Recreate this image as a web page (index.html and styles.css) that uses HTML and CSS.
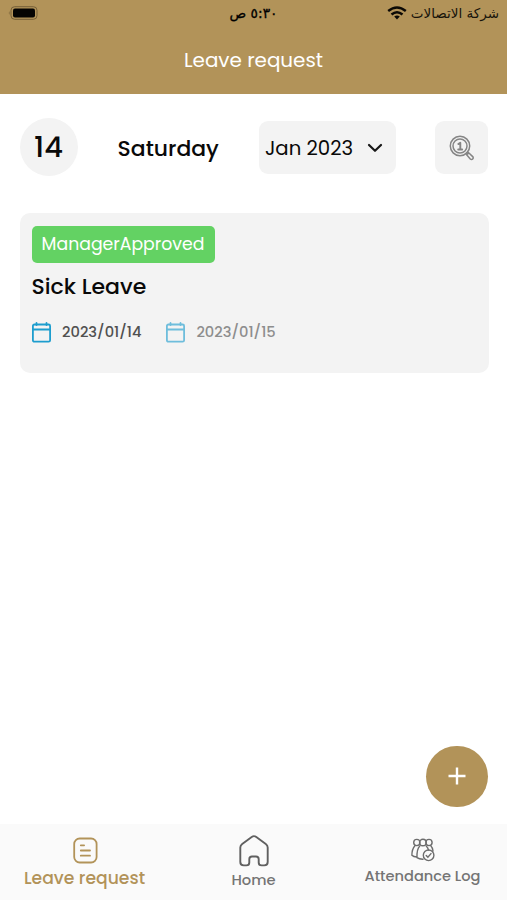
FILE: index.html
```html
<!DOCTYPE html>
<html lang="en">
<head>
<meta charset="utf-8">
<meta name="viewport" content="width=device-width, initial-scale=1">
<title>Leave request</title>
<link rel="stylesheet" href="styles.css">
</head>
<body>
<div class="app">
  <header class="header">
    <div class="status">
      <svg class="battery" width="30" height="14" viewBox="0 0 30 14"><rect x="3" y=".7" width="26" height="12.6" rx="3.6" fill="none" stroke="#755f38" stroke-width="1"/><rect x="5" y="2.6" width="22" height="8.8" rx="2" fill="#050403"/><path d="M1.5 5Q0 7 1.5 9Z" fill="#755f38"/></svg>
      <span class="time" dir="rtl" lang="ar">٥:٣٠ ص</span>
      <div class="network">
        <svg width="20" height="14" viewBox="0 0 20 14" fill="none" stroke="#0b0905" stroke-width="2.5"><path d="M1.2 5Q10-2 18.8 5M4.5 8.5Q10 4 15.5 8.5"/><path d="M7.2 10.6Q10 8.4 12.8 10.6L10 13.6Z" fill="#0b0905" stroke="none"/></svg>
        <span class="carrier" dir="rtl" lang="ar">شركة الاتصالات</span>
      </div>
    </div>
    <h1 class="title">Leave request</h1>
  </header>
  <main class="main">
    <div class="filters">
      <div class="day">14</div>
      <div class="weekday">Saturday</div>
      <button class="month"><span class="month-text">Jan 2023</span><svg width="16" height="10" viewBox="0 0 16 10" fill="none" stroke="#171717" stroke-width="2.2" stroke-linecap="round" stroke-linejoin="round"><path d="m2 2 6 5.8L14 2"/></svg></button>
      <button class="search" aria-label="Search"><svg width="26" height="26" viewBox="0 0 26 26" fill="none" stroke="#858585" stroke-width="1.5" stroke-linejoin="round" stroke-linecap="round"><circle cx="11" cy="11" r="9.7"/><circle cx="11" cy="11" r="7"/><path d="m9.3 9.1 2-1.3v6.6M9.2 14.5h4" stroke-width="1.9"/><path d="m18 18 .9.9M17.4 19.5c-.8-1 1-2.8 2-2l4.3 4.1c1.6 1.6-.8 4-2.4 2.4Z"/></svg></button>
    </div>
    <article class="card">
      <span class="badge">ManagerApproved</span>
      <h2 class="type">Sick Leave</h2>
      <div class="dates">
        <div class="date"><svg class="calendar" width="19" height="21" viewBox="0 0 19 21" fill="none" stroke="currentColor" stroke-width="1.8" stroke-linecap="round"><rect x=".9" y="2.5" width="17.2" height="17.2" rx="1.5"/><path d="M1 7.5h17M4.5 1v2M14.5 1v2"/></svg><span>2023/01/14</span></div>
        <div class="date end"><svg class="calendar" width="19" height="21" viewBox="0 0 19 21" fill="none" stroke="currentColor" stroke-width="1.8" stroke-linecap="round"><rect x=".9" y="2.5" width="17.2" height="17.2" rx="1.5"/><path d="M1 7.5h17M4.5 1v2M14.5 1v2"/></svg><span>2023/01/15</span></div>
      </div>
    </article>
    <button class="add" aria-label="Add request"><svg width="18" height="18" viewBox="0 0 18 18" stroke="#fff" stroke-width="2.4"><path d="M9 .5v17M.5 9h17"/></svg></button>
  </main>
  <nav class="nav">
    <a class="tab active"><svg width="26" height="27" viewBox="0 0 26 27" fill="none" stroke="currentColor" stroke-width="1.8" stroke-linecap="round"><rect x="2.2" y="1.5" width="22.4" height="24" rx="5.5"/><path d="M8.8 8.3h3.3M8.8 13.5h9.2M8.8 18.7h9.2"/></svg><span class="tab-request">Leave request</span></a>
    <a class="tab"><svg width="30" height="32" viewBox="0 0 30 32" fill="none" stroke="#606060" stroke-width="1.9" stroke-linejoin="round"><path d="M12.7 2Q15 .3 17.3 2L26.8 8.9Q28.7 10.3 28.7 12.5V27Q28.7 30.4 25.3 30.4H22.6Q19.7 30.4 19.7 27.5V24.2Q19.7 21.5 17 21.5H13Q10.3 21.5 10.3 24.2V27.5Q10.3 30.4 7.4 30.4H4.7Q1.3 30.4 1.3 27V12.5Q1.3 10.3 3.2 8.9Z"/></svg><span class="tab-home">Home</span></a>
    <a class="tab"><svg width="24" height="24" viewBox="0 0 24 24" fill="none" stroke="#6d6d6d" stroke-width="1.4" stroke-linecap="round"><circle cx="5.8" cy="4.5" r="3.1"/><circle cx="18" cy="4.5" r="3.1"/><circle cx="11.9" cy="4.5" r="3.3"/><path d="M3.9 7.8C2 10 .9 13 .9 17.2Q2.5 18.8 5.8 19M8.8 7.9C6.6 10 5.8 14 6 19.6Q8.4 21.3 12 21.2M15.2 7.9Q17 9.5 17.5 12M19.8 7.8Q21.7 9.8 22 13"/><circle cx="17.6" cy="17.3" r="5.3"/><path d="m15.2 17.5 1.7 1.8 3.1-3.7"/></svg><span class="tab-log">Attendance Log</span></a>
  </nav>
</div>
</body>
</html>
```
FILE: styles.css
```css
* { box-sizing: border-box; }
body { margin: 0; font-family: Poppins, Inter, sans-serif; background: #fff; color: #090909; }
button { border: 0; padding: 0; font: inherit; color: inherit; }
svg { display: block; flex: none; }
h1, h2 { margin: 0; font-weight: 400; }
span, .weekday, .title, .type { white-space: nowrap; }
.app { height: 900px; display: flex; flex-direction: column; }
.header { height: 94px; background: #b29359; }
.status { height: 26px; padding: 0 8px; display: grid; grid-template-columns: 1fr auto 1fr; align-items: center; color: #17130b; font-family: "DejaVu Sans", sans-serif; }
.time { font-size: 13.8px; color: #000; -webkit-text-stroke: .3px #000; }
.network { display: flex; justify-content: flex-end; align-items: center; gap: 4px; }
.carrier { font-size: 13.5px; }
.title { color: #fff; font-size: 19.9px; line-height: 30px; text-align: center; margin-top: 19px; }
.main { flex: 1; padding: 24px 18.5px 17px 19.5px; display: flex; flex-direction: column; }
.filters { display: flex; align-items: center; justify-content: space-between; height: 59px; }
.day { width: 58px; height: 58px; border-radius: 50%; background: #f3f3f3; display: grid; place-items: center; font-size: 29px; font-weight: 500; align-self: flex-start; padding-top: 1px; }
.weekday { font-size: 21.9px; font-weight: 500; line-height: 32px; padding-top: 2px; }
.month { width: 137px; height: 53px; margin-right: -1px; border-radius: 9px; background: #f3f3f3; display: flex; align-items: center; justify-content: space-between; padding: 1px 13px 0 6px; }
.month-text { font-size: 19.7px; }
.search { width: 53.5px; height: 53px; border-radius: 9px; background: #f3f3f3; display: grid; place-items: center; }
.card { margin-top: 36px; height: 160px; border-radius: 10px; background: #f3f3f3; padding: 12.5px 12px; }
.badge { display: flex; align-items: center; justify-content: center; width: 183px; height: 37.5px; padding-bottom: 1px; border-radius: 5px; background: #63d263; color: #fff; font-size: 17.3px; }
.type { font-size: 22px; line-height: 34px; font-weight: 500; margin-top: 7px; }
.dates { display: flex; gap: 24.5px; margin-top: 17.5px; color: #505050; font-size: 14.7px; font-weight: 500; }
.date { display: flex; align-items: center; gap: 11.5px; height: 21px; }
.calendar { color: #1d9dce; }
.end { opacity: .62; }
.add { width: 61.5px; height: 61.5px; border-radius: 50%; background: #b29359; display: grid; place-items: center; margin: auto 1px 0 0; align-self: flex-end; }
.nav { height: 76px; background: #fafafa; display: grid; grid-template-columns: repeat(3, 1fr); color: #747474; }
.tab { display: flex; flex-direction: column; align-items: center; font-weight: 500; }
.active { color: #b29359; }
.tab svg { margin-top: 13px; }
.tab:nth-child(2) svg { margin-top: 11px; }
.tab:nth-child(3) svg { margin-top: 14px; }
.tab-request { font-size: 17.2px; line-height: 24px; margin-top: 2px; }
.tab-home { font-size: 14.7px; line-height: 22px; margin-top: 2px; }
.tab-log { font-size: 14.6px; line-height: 22px; margin-top: 3px; }
```
